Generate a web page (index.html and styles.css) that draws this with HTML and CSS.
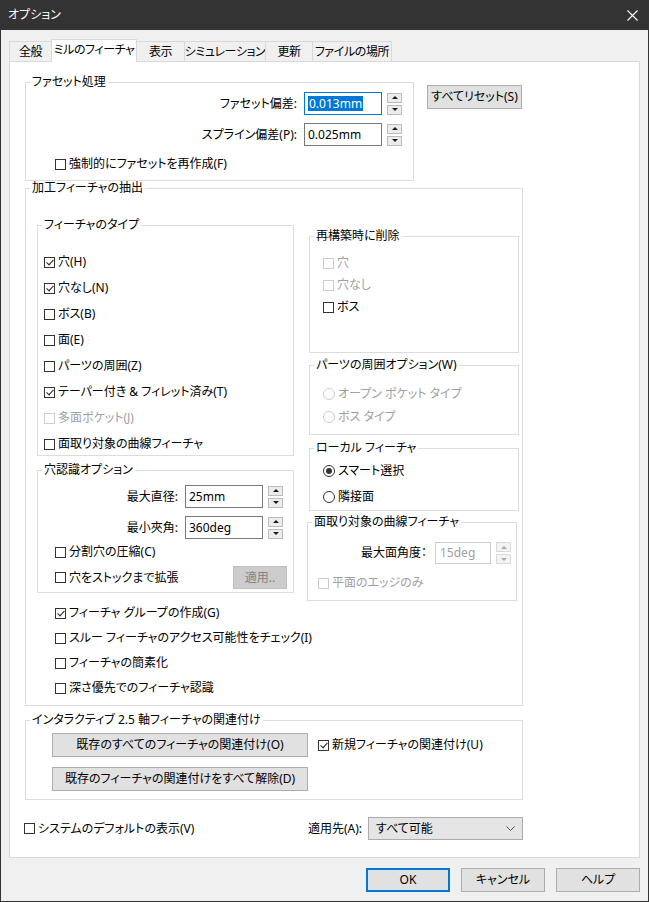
FILE: index.html
```html
<!DOCTYPE html>
<html lang="ja">
<head>
<meta charset="utf-8">
<title>オプション</title>
<link rel="stylesheet" href="styles.css">
</head>
<body>
<div class="window">
  <header class="titlebar">
    <span class="title">オプション</span>
    <svg class="close" width="11" height="11" viewBox="0 0 11 11" aria-label="閉じる"><path d="M0.5 0.5L10.5 10.5M10.5 0.5L0.5 10.5" stroke="#ffffff" stroke-width="1.1" fill="none"/></svg>
  </header>
  <div class="dialog">
    <nav class="tabs">
      <span class="tab tab-general">全般</span>
      <span class="tab tab-mill active">ミルのフィーチャ</span>
      <span class="tab tab-view">表示</span>
      <span class="tab tab-sim">シミュレーション</span>
      <span class="tab tab-update">更新</span>
      <span class="tab tab-files">ファイルの場所</span>
    </nav>
    <section class="page">
      <div class="page-inner">
        <div class="top-row">
          <fieldset class="group facet">
            <legend>ファセット処理</legend>
            <div class="facet-body">
              <div class="num-row">
                <span class="num-label">ファセット偏差:</span>
                <span class="field focused"><span class="selection">0.013mm</span></span>
                <span class="spin"><span class="spin-up"></span><span class="spin-down"></span></span>
              </div>
              <div class="num-row">
                <span class="num-label">スプライン偏差(P):</span>
                <span class="field">0.025mm</span>
                <span class="spin"><span class="spin-up"></span><span class="spin-down"></span></span>
              </div>
              <div class="check facet-check"><span class="box"></span>強制的にファセットを再作成(F)</div>
            </div>
          </fieldset>
          <button class="btn reset">すべてリセット(S)</button>
        </div>

        <fieldset class="group extract">
          <legend>加工フィーチャの抽出</legend>
          <div class="extract-body">
            <div class="col-left">
              <fieldset class="group ftype">
                <legend>フィーチャのタイプ</legend>
                <div class="ftype-body">
                  <div class="check"><span class="box on"></span>穴(H)</div>
                  <div class="check"><span class="box on"></span>穴なし(N)</div>
                  <div class="check"><span class="box"></span>ボス(B)</div>
                  <div class="check"><span class="box"></span>面(E)</div>
                  <div class="check"><span class="box"></span>パーツの周囲(Z)</div>
                  <div class="check"><span class="box on"></span>テーパー付き &amp; フィレット済み(T)</div>
                  <div class="check disabled"><span class="box"></span>多面ポケット(J)</div>
                  <div class="check"><span class="box"></span>面取り対象の曲線フィーチャ</div>
                </div>
              </fieldset>
              <fieldset class="group hole">
                <legend>穴認識オプション</legend>
                <div class="hole-body">
                  <div class="num-row">
                    <span class="num-label">最大直径:</span>
                    <span class="field">25mm</span>
                    <span class="spin"><span class="spin-up"></span><span class="spin-down"></span></span>
                  </div>
                  <div class="num-row">
                    <span class="num-label">最小夾角:</span>
                    <span class="field">360deg</span>
                    <span class="spin"><span class="spin-up"></span><span class="spin-down"></span></span>
                  </div>
                  <div class="check hole-check"><span class="box"></span>分割穴の圧縮(C)</div>
                  <div class="hole-last">
                    <div class="check"><span class="box"></span>穴をストックまで拡張</div>
                    <button class="btn apply">適用..</button>
                  </div>
                </div>
              </fieldset>
              <div class="extra-checks">
                <div class="check"><span class="box on"></span>フィーチャ グループの作成(G)</div>
                <div class="check"><span class="box"></span>スルー フィーチャのアクセス可能性をチェック(I)</div>
                <div class="check"><span class="box"></span>フィーチャの簡素化</div>
                <div class="check"><span class="box"></span>深さ優先でのフィーチャ認識</div>
              </div>
            </div>

            <div class="col-right">
              <fieldset class="group rebuild">
                <legend>再構築時に削除</legend>
                <div class="rebuild-body">
                  <div class="check disabled"><span class="box"></span>穴</div>
                  <div class="check disabled"><span class="box"></span>穴なし</div>
                  <div class="check"><span class="box"></span>ボス</div>
                </div>
              </fieldset>
              <fieldset class="group outline">
                <legend>パーツの周囲オプション(W)</legend>
                <div class="outline-body">
                  <div class="radio disabled"><span class="dot"></span>オープン ポケット タイプ</div>
                  <div class="radio disabled"><span class="dot"></span>ボス タイプ</div>
                </div>
              </fieldset>
              <fieldset class="group local">
                <legend>ローカル フィーチャ</legend>
                <div class="local-body">
                  <div class="radio"><span class="dot on"></span>スマート選択</div>
                  <div class="radio"><span class="dot"></span>隣接面</div>
                </div>
              </fieldset>
              <fieldset class="group chamfer">
                <legend>面取り対象の曲線フィーチャ</legend>
                <div class="chamfer-body">
                  <div class="num-row short">
                    <span class="num-label">最大面角度：</span>
                    <span class="field disabled small">15deg</span>
                    <span class="spin disabled"><span class="spin-up"></span><span class="spin-down"></span></span>
                  </div>
                  <div class="check disabled chamfer-check"><span class="box"></span>平面のエッジのみ</div>
                </div>
              </fieldset>
            </div>
          </div>
        </fieldset>

        <fieldset class="group interact">
          <legend>インタラクティブ 2.5 軸フィーチャの関連付け</legend>
          <div class="interact-body">
            <div class="assoc-row">
              <button class="btn wide">既存のすべてのフィーチャの関連付け(O)</button>
              <div class="check"><span class="box on"></span>新規フィーチャの関連付け(U)</div>
            </div>
            <div class="assoc-row">
              <button class="btn wide">既存のフィーチャの関連付けをすべて解除(D)</button>
            </div>
          </div>
        </fieldset>

        <div class="bottom-row">
          <div class="check sys-check"><span class="box"></span>システムのデフォルトの表示(V)</div>
          <span class="apply-label">適用先(A):</span>
          <div class="select">
            <span>すべて可能</span>
            <svg width="9" height="5" viewBox="0 0 9 5"><path d="M0.5 0.5L4.5 4.5L8.5 0.5" stroke="#555555" fill="none"/></svg>
          </div>
        </div>
      </div>
    </section>
    <footer class="footer">
      <button class="btn default">OK</button>
      <button class="btn">キャンセル</button>
      <button class="btn">ヘルプ</button>
    </footer>
  </div>
</div>
</body>
</html>
```

FILE: styles.css
```css
* { box-sizing: border-box; }
html, body { margin: 0; padding: 0; }
body {
  width: 649px;
  height: 902px;
  overflow: hidden;
  background: #f0f0f0;
  font-family: "Noto Sans", "Noto Sans CJK JP", sans-serif;
  font-size: 12px;
  line-height: 16px;
  color: #000;
  font-feature-settings: "palt" 1;
}
.window {
  width: 649px;
  height: 902px;
  display: flex;
  flex-direction: column;
}
.titlebar {
  height: 30px;
  flex: none;
  background: #333333;
  color: #ffffff;
  display: flex;
  align-items: center;
  justify-content: space-between;
  padding: 0 11px 0 8px;
}
.close { display: block; }

.dialog {
  flex: 1;
  min-height: 0;
  display: flex;
  flex-direction: column;
  border: 1px solid #333333;
  border-top: 0;
  padding: 9px 8px 9px 8px;
}

/* tabs */
.tabs {
  display: flex;
  align-items: flex-end;
  height: 23px;
  margin-bottom: -1px;
  position: relative;
  z-index: 1;
  flex: none;
}
.tab {
  height: 20px;
  margin-bottom: 1px;
  margin-left: -1px;
  border: 1px solid #d9d9d9;
  border-bottom: 0;
  background: #f0f0f0;
  display: flex;
  align-items: center;
  justify-content: center;
  white-space: nowrap;
  letter-spacing: -0.4px;
}
.tab:first-child { margin-left: 0; }
.tab.active {
  height: 23px;
  margin-bottom: 0;
  background: #ffffff;
  padding-bottom: 2px;
}
.tab-general { width: 43px; }
.tab-mill { width: 86px; }
.tab-view { width: 49px; }
.tab-sim { width: 82px; }
.tab-update { width: 48px; }
.tab-files { width: 80px; }

/* page */
.page {
  flex: 1;
  min-height: 0;
  background: #ffffff;
  border: 1px solid #d9d9d9;
  padding: 12px 0 0 15px;
}
.page-inner {
  width: 498px;
  display: flex;
  flex-direction: column;
}

/* group boxes */
.group {
  border: 1px solid #dcdcdc;
  margin: 0;
  padding: 0;
  min-width: 0;
}
.group > legend {
  padding: 0 2px;
  margin-left: 4px;
  line-height: 16px;
}

/* controls */
.check, .radio {
  display: flex;
  align-items: center;
  height: 16px;
  white-space: nowrap;
}
.box {
  width: 11px;
  height: 11px;
  border: 1px solid #333333;
  background: #ffffff;
  margin-right: 3px;
  position: relative;
  flex: none;
}
.box.on::after {
  content: "";
  position: absolute;
  left: 3px;
  top: 0px;
  width: 3px;
  height: 6px;
  border: solid #222222;
  border-width: 0 1px 1px 0;
  transform: rotate(42deg);
}
.check.disabled, .radio.disabled { color: #a0a0a0; }
.check.disabled .box, .radio.disabled .dot { border-color: #cccccc; }

.dot {
  width: 12px;
  height: 12px;
  border: 1px solid #333333;
  border-radius: 50%;
  background: #ffffff;
  margin-right: 3px;
  display: flex;
  align-items: center;
  justify-content: center;
  flex: none;
}
.dot.on::after {
  content: "";
  width: 6px;
  height: 6px;
  border-radius: 50%;
  background: #333333;
}

.num-row {
  display: flex;
  align-items: center;
  height: 23px;
}
.num-row + .num-row { margin-top: 8px; }
.num-label {
  flex: 1;
  text-align: right;
  margin-right: 7px;
  white-space: nowrap;
}
.field {
  width: 78px;
  height: 23px;
  border: 1px solid #7a7a7a;
  background: #ffffff;
  padding-left: 3px;
  display: flex;
  align-items: center;
  flex: none;
}
.field.focused { border-color: #0078d7; }
.field.disabled { border-color: #cccccc; color: #a0a0a0; }
.field.small { width: 56px; height: 22px; padding-left: 4px; }
.selection {
  background: #0078d7;
  color: #ffffff;
  padding: 0 1px;
  line-height: 15px;
}
.spin {
  display: flex;
  flex-direction: column;
  justify-content: space-between;
  width: 15px;
  height: 22px;
  margin-left: 5px;
  flex: none;
}
.spin-up, .spin-down {
  height: 10px;
  border: 1px solid #bcbcbc;
  background: #ececec;
  display: flex;
  align-items: center;
  justify-content: center;
}
.spin-up::after {
  content: "";
  border-left: 3px solid transparent;
  border-right: 3px solid transparent;
  border-bottom: 3px solid #1a1a1a;
}
.spin-down::after {
  content: "";
  border-left: 3px solid transparent;
  border-right: 3px solid transparent;
  border-top: 3px solid #1a1a1a;
}
.spin.disabled .spin-up, .spin.disabled .spin-down { border-color: #dadada; background: #f3f3f3; }
.spin.disabled .spin-up::after { border-bottom-color: #a8a8a8; }
.spin.disabled .spin-down::after { border-top-color: #a8a8a8; }

.btn {
  font: inherit;
  font-feature-settings: "palt" 1;
  color: #000000;
  background: #e1e1e1;
  border: 1px solid #adadad;
  height: 24px;
  margin: 0;
  padding: 0;
  display: flex;
  align-items: center;
  justify-content: center;
  white-space: nowrap;
  flex: none;
}

/* facet */
.top-row {
  display: flex;
  align-items: flex-start;
}
.facet { width: 389px; flex: none; }
.facet-body { padding: 2px 11px 8px 29px; }
.facet-check { margin-top: 10px; }
.reset {
  width: 95px;
  margin: 11px 0 0 13px;
}

/* extraction */
.extract { margin-top: -1px; }
.extract-body {
  display: grid;
  grid-template-columns: 257px 210px;
  column-gap: 15px;
  align-items: start;
  padding: 0 3px 9px 11px;
}
.col-left, .col-right {
  display: flex;
  flex-direction: column;
}
.ftype { margin-top: 21px; }
.ftype-body {
  padding: 21px 0 3px 6px;
  display: flex;
  flex-direction: column;
  gap: 10px;
}
.hole { margin-top: 6px; }
.hole-body { padding: 7px 10px 3px 17px; }
.hole-check { margin-top: 5px; }
.hole-last {
  display: flex;
  align-items: center;
  justify-content: space-between;
  height: 23px;
  margin-top: 6px;
  margin-right: -4px;
}
.apply {
  width: 54px;
  height: 23px;
  background: #cccccc;
  border-color: #bfbfbf;
  color: #838383;
}
.extra-checks {
  margin-top: 12px;
  padding-left: 18px;
  display: flex;
  flex-direction: column;
  gap: 9px;
}

.rebuild { margin-top: 32px; }
.rebuild-body {
  padding: 11px 0 37px 13px;
  display: flex;
  flex-direction: column;
  gap: 6px;
}
.outline { margin-top: 4px; }
.outline-body {
  padding: 13px 0 9px 13px;
  display: flex;
  flex-direction: column;
  gap: 7px;
}
.local { margin-top: 5px; }
.local-body {
  padding: 7px 0 5px 13px;
  display: flex;
  flex-direction: column;
  gap: 10px;
}
.chamfer {
  margin-top: 3px;
  margin-left: -2px;
  margin-right: 2px;
}
.chamfer-body { padding: 12px 5px 9px 10px; }
.num-row.short { height: 22px; }
.chamfer .num-label { margin-right: 8px; }
.chamfer-check { margin-top: 11px; }

/* interactive */
.interact { margin-top: 6px; }
.interact-body { padding: 5px 0 8px 26px; }
.assoc-row {
  display: flex;
  align-items: center;
  gap: 10px;
}
.assoc-row + .assoc-row { margin-top: 10px; }
.btn.wide { width: 256px; }

/* bottom row */
.bottom-row {
  display: flex;
  align-items: center;
  height: 23px;
  margin-top: 17px;
}
.sys-check { flex: 1; margin-left: -1px; }
.apply-label { margin-right: 6px; }
.select {
  width: 155px;
  height: 23px;
  background: #e5e5e5;
  border: 1px solid #acacac;
  display: flex;
  align-items: center;
  justify-content: space-between;
  padding: 0 7px 0 7px;
}
.select svg { display: block; }

/* footer */
.footer {
  display: flex;
  justify-content: flex-end;
  gap: 11px;
  margin-top: 10px;
  flex: none;
}
.footer .btn { width: 84px; height: 24px; }
.btn.default { border: 2px solid #0078d7; }
```
